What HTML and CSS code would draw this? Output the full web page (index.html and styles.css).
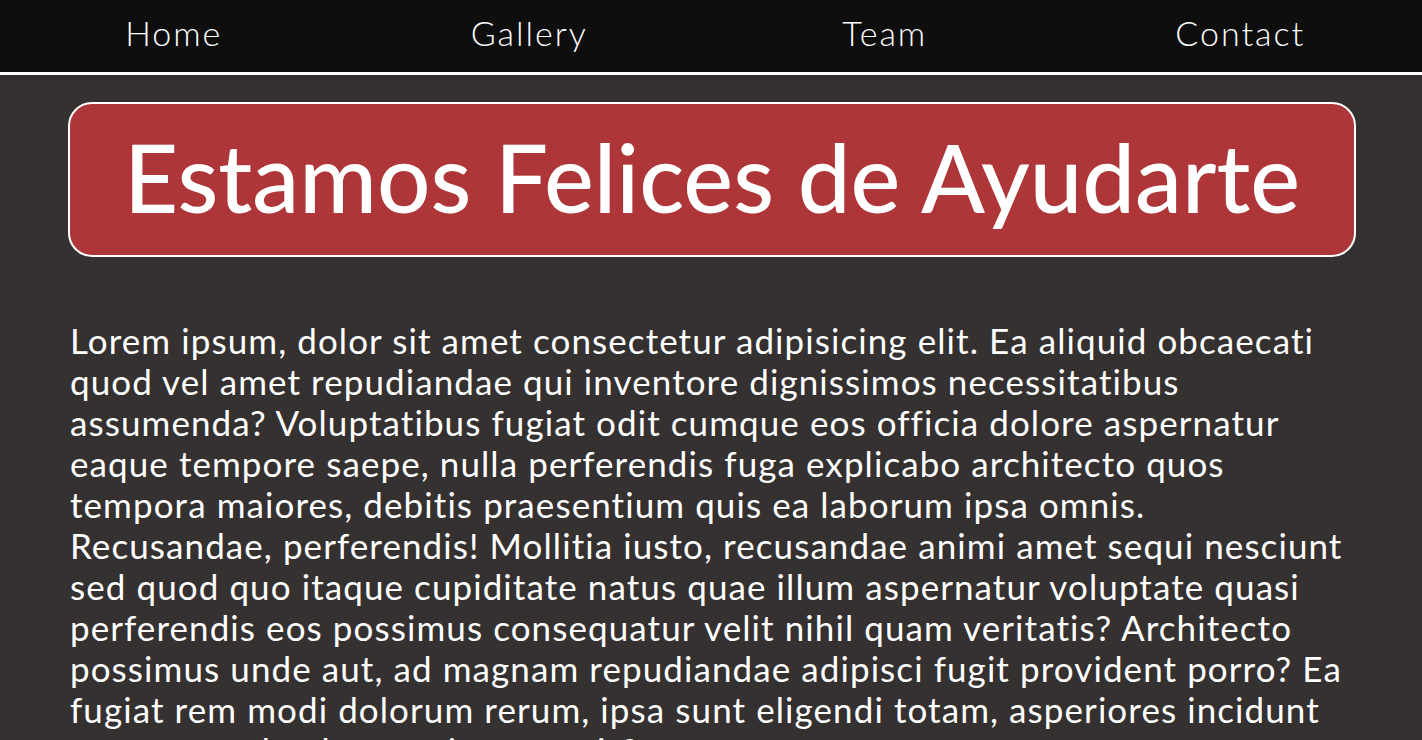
FILE: index.html
```html
<!DOCTYPE html>
<html lang="es">
<head>
<meta charset="utf-8">
<title>Estamos Felices de Ayudarte</title>
<link rel="stylesheet" href="styles.css">
</head>
<body>
<nav class="nav">
  <a class="nav-link" href="#">Home</a>
  <a class="nav-link" href="#">Gallery</a>
  <a class="nav-link" href="#">Team</a>
  <a class="nav-link" href="#">Contact</a>
</nav>
<main class="main">
  <h1 class="banner">Estamos Felices de Ayudarte</h1>
  <p class="text">Lorem ipsum, dolor sit amet consectetur adipisicing elit. Ea aliquid obcaecati quod vel amet repudiandae qui inventore dignissimos necessitatibus assumenda? Voluptatibus fugiat odit cumque eos officia dolore aspernatur eaque tempore saepe, nulla perferendis fuga explicabo architecto quos tempora maiores, debitis praesentium quis ea laborum ipsa omnis. Recusandae, perferendis! Mollitia iusto, recusandae animi amet sequi nesciunt sed quod quo itaque cupiditate natus quae illum aspernatur voluptate quasi perferendis eos possimus consequatur velit nihil quam veritatis? Architecto possimus unde aut, ad magnam repudiandae adipisci fugit provident porro? Ea fugiat rem modi dolorum rerum, ipsa sunt eligendi totam, asperiores incidunt cumque unde obcaecati quos quis?</p>
</main>
</body>
</html>
```
FILE: styles.css
```css
html, body {
  margin: 0;
  padding: 0;
}
body {
  background: #353130;
  color: #ffffff;
  font-family: Lato, "Open Sans", sans-serif;
  font-variant-ligatures: none;
}
.nav {
  display: grid;
  grid-template-columns: repeat(4, 1fr);
  height: 72px;
  align-items: center;
  background: #0f0e0e;
  border-bottom: 3px solid #ffffff;
}
.nav-link {
  justify-self: center;
  color: #ffffff;
  text-decoration: none;
  font-size: 34px;
  font-weight: 300;
  letter-spacing: 2px;
  margin-left: -8px;
  margin-bottom: 8px;
}
.main {
  padding: 27px 66px 0 68px;
}
.banner {
  margin: 0;
  background: #ae3638;
  border: 2px solid #ffffff;
  border-radius: 24px;
  display: flex;
  align-items: center;
  justify-content: center;
  font-size: 94px;
  font-weight: 500;
  line-height: 1;
  padding-bottom: 6px;
  box-sizing: border-box;
  height: 155px;
}
.text {
  margin: 63px 4px 0 2px;
  font-size: 35px;
  line-height: 41px;
  font-weight: 400;
  letter-spacing: 1.08px;
}
```
